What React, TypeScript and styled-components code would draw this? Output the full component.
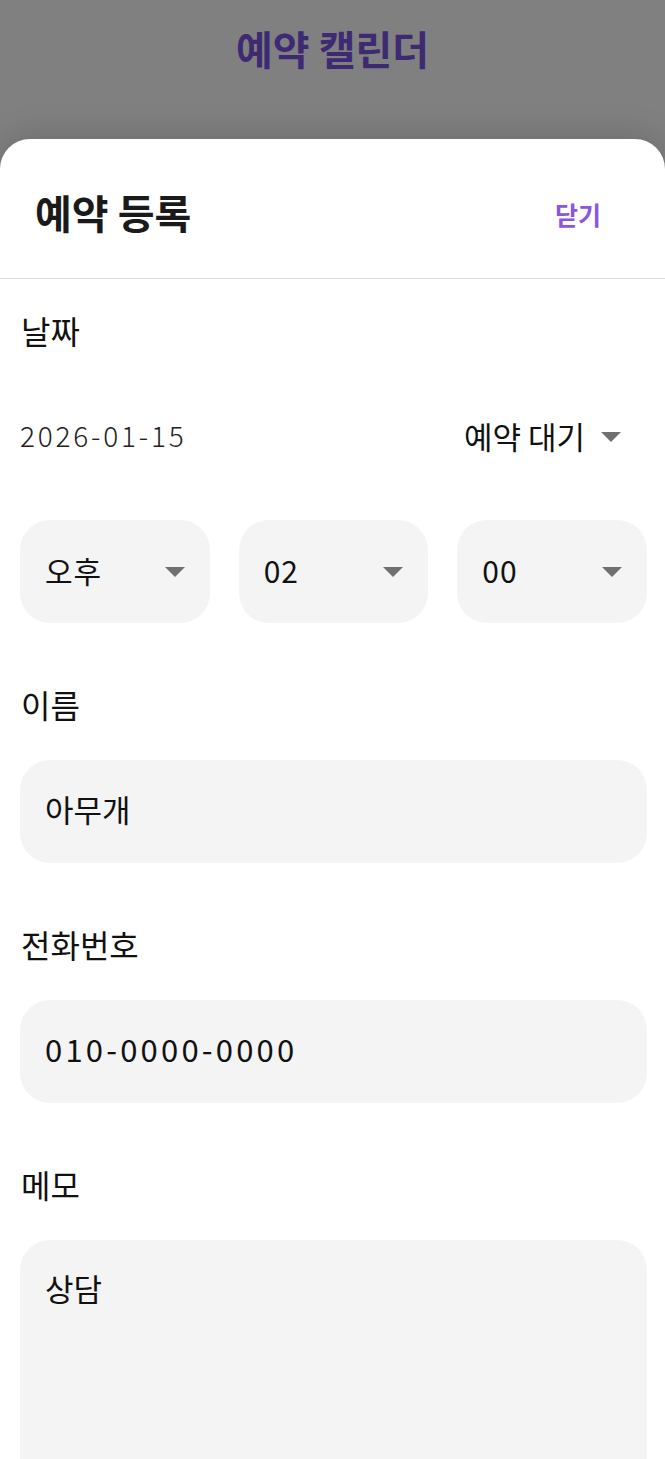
import styled, { createGlobalStyle } from 'styled-components';

const GlobalStyle = createGlobalStyle`
  html, body {
    margin: 0;
    padding: 0;
    background: #808080;
  }
  body {
    font-family: "Noto Sans CJK KR", "Noto Sans", sans-serif;
    color: #111;
  }
  * { box-sizing: border-box; }
`;

const Screen = styled.div`
  height: 1459px;
  overflow: hidden;
  display: flex;
  flex-direction: column;
  background: #808080;
`;

const PageTitle = styled.h1`
  margin: 0;
  height: 139px;
  flex-shrink: 0;
  padding-top: 22px;
  text-align: center;
  font-size: 40px;
  line-height: 52px;
  font-weight: 700;
  color: #3e2a72;
`;

const Sheet = styled.div`
  flex: 1;
  background: #fff;
  border-radius: 30px 30px 0 0;
  box-shadow: 0 -8px 30px rgba(0, 0, 0, 0.12);
`;

const SheetHeader = styled.div`
  height: 140px;
  display: flex;
  align-items: center;
  justify-content: space-between;
  padding: 6px 64px 0 35px;
  border-bottom: 1px solid #dcdcdc;
`;

const SheetTitle = styled.h2`
  margin: 0;
  font-size: 40px;
  font-weight: 700;
  color: #1a1a1a;
`;

const CloseButton = styled.button`
  border: 0;
  background: none;
  padding: 0;
  font-family: inherit;
  font-size: 25px;
  font-weight: 700;
  color: #8a55e0;
  margin-top: 4px;
`;

const Form = styled.div`
  padding: 31px 18px 0 20px;
  display: flex;
  flex-direction: column;
`;

const Label = styled.div<{ $gap?: number }>`
  font-size: 32px;
  line-height: 40px;
  color: #111;
  padding-left: 1px;
  margin-bottom: ${(p) => p.$gap ?? 36}px;
`;

const DateRow = styled.div`
  height: 60px;
  display: flex;
  align-items: center;
  justify-content: space-between;
  padding-right: 26px;
  margin-bottom: 55px;
`;

const DateText = styled.div`
  font-size: 28px;
  font-weight: 300;
  color: #222;
  letter-spacing: 2.8px;
`;

const StatusSelect = styled.div`
  display: flex;
  align-items: center;
  gap: 16px;
  font-size: 31px;
  color: #111;
`;

const Arrow = styled.span`
  width: 0;
  height: 0;
  border-left: 10.5px solid transparent;
  border-right: 10.5px solid transparent;
  border-top: 10px solid #707070;
  margin-top: 4px;
`;

const TimeRow = styled.div`
  display: grid;
  grid-template-columns: repeat(3, 1fr);
  gap: 29px;
  margin-bottom: 61px;
`;

const SelectBox = styled.div`
  height: 103px;
  border-radius: 30px;
  background: #f4f4f4;
  display: flex;
  align-items: center;
  justify-content: space-between;
  padding: 0 25px 3px;
  font-size: 30px;
  letter-spacing: 1px;
`;

const InputBox = styled.div<{ $tall?: boolean; $spaced?: boolean }>`
  height: ${(p) => (p.$tall ? 260 : 103)}px;
  border-radius: 30px;
  background: #f4f4f4;
  display: flex;
  align-items: ${(p) => (p.$tall ? 'flex-start' : 'center')};
  padding: ${(p) => (p.$tall ? '25px 25px' : '0 25px 6px')};
  font-size: 31px;
  letter-spacing: ${(p) => (p.$spaced ? 3.2 : 0)}px;
  margin-bottom: 61px;
`;

const times = ['오후', '02', '00'];

export default function App() {
  return (
    <>
      <GlobalStyle />
      <Screen>
        <PageTitle>예약 캘린더</PageTitle>
        <Sheet>
          <SheetHeader>
            <SheetTitle>예약 등록</SheetTitle>
            <CloseButton>닫기</CloseButton>
          </SheetHeader>
          <Form>
            <Label $gap={55}>날짜</Label>
            <DateRow>
              <DateText>2026-01-15</DateText>
              <StatusSelect>
                예약 대기
                <Arrow />
              </StatusSelect>
            </DateRow>
            <TimeRow>
              {times.map((t) => (
                <SelectBox key={t}>
                  {t}
                  <Arrow />
                </SelectBox>
              ))}
            </TimeRow>
            <Label>이름</Label>
            <InputBox>아무개</InputBox>
            <Label>전화번호</Label>
            <InputBox $spaced>010-0000-0000</InputBox>
            <Label>메모</Label>
            <InputBox $tall>상담</InputBox>
          </Form>
        </Sheet>
      </Screen>
    </>
  );
}
